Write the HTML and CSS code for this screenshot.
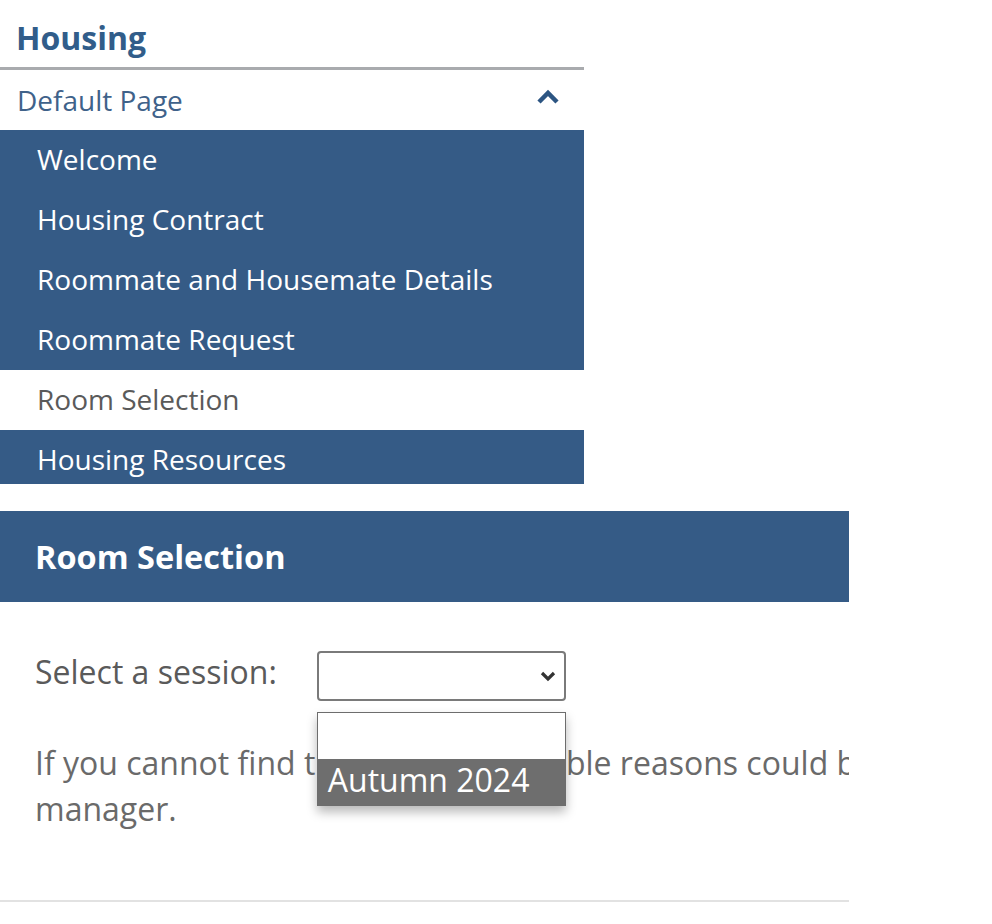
FILE: index.html
```html
<!DOCTYPE html>
<html lang="en">
<head>
<meta charset="utf-8">
<title>Housing - Room Selection</title>
<link rel="stylesheet" href="styles.css">
</head>
<body>
<div class="page">
  <aside class="sidebar">
    <h2 class="side-title">Housing</h2>
    <div class="group-head">
      <span>Default Page</span>
      <svg class="chev-up" width="24" height="16" viewBox="0 0 24 16" aria-hidden="true"><path d="M3 13 L12 4 L21 13" fill="none" stroke="#2c5582" stroke-width="4.5" stroke-linejoin="miter"/></svg>
    </div>
    <ul class="nav">
      <li class="nav-item">Welcome</li>
      <li class="nav-item">Housing Contract</li>
      <li class="nav-item">Roommate and Housemate Details</li>
      <li class="nav-item">Roommate Request</li>
      <li class="nav-item current">Room Selection</li>
      <li class="nav-item last">Housing Resources</li>
    </ul>
  </aside>

  <section class="panel">
    <h1 class="panel-title">Room Selection</h1>
    <div class="panel-body">
      <div class="session-row">
        <span class="session-label">Select a session:</span>
        <div class="select-wrap">
          <div class="select-box">
            <svg class="chev-down" width="18" height="12" viewBox="0 0 18 12" aria-hidden="true"><path d="M3 3 L9 9 L15 3" fill="none" stroke="#333" stroke-width="3.2"/></svg>
          </div>
          <div class="dropdown">
            <div class="option blank"></div>
            <div class="option selected">Autumn 2024</div>
          </div>
        </div>
      </div>
      <p class="note"><span class="line1">If you cannot find the session, possible reasons could be that it is not yet open or you are not eligible. Please contact your housing</span><br>manager.</p>
    </div>
    <hr class="rule">
  </section>
</div>
</body>
</html>
```

FILE: styles.css
```css
* { box-sizing: border-box; }
html, body { margin: 0; padding: 0; background: #fff; }
body { font-family: "Open Sans", "Noto Sans", sans-serif; }

.page { width: 992px; }

.sidebar { width: 584px; }
.side-title {
  margin: 0;
  padding: 15px 0 0 16px;
  font-size: 32px;
  line-height: 46px;
  font-weight: 700;
  color: #315d8a;
  border-bottom: 3px solid #a9abae;
  box-sizing: content-box;
  height: 52px;
}
.group-head {
  height: 60px;
  display: flex;
  align-items: center;
  justify-content: space-between;
  padding: 0 24px 0 17px;
  font-size: 28px;
  color: #3f628a;
}
.chev-up { display: block; margin-top: -6px; }

.nav { list-style: none; margin: 0; padding: 0; }
.nav-item {
  height: 60px;
  line-height: 58px;
  padding-left: 37px;
  background: #355b86;
  color: #fff;
  font-size: 28px;
  overflow: hidden;
}
.nav-item.current { background: #fff; color: #5a5a5a; }
.nav-item.last { height: 54px; }

.panel { width: 849px; margin-top: 27px; overflow: hidden; }
.panel-title {
  margin: 0;
  height: 91px;
  display: flex;
  align-items: center;
  padding-left: 35px;
  background: #355b86;
  color: #fff;
  font-size: 32.5px;
  font-weight: 700;
}
.panel-body { padding: 48px 0 0 35px; }
.session-row { display: flex; align-items: center; gap: 40px; }
.session-label { font-size: 32px; color: #5a5a5a; padding-bottom: 8px; }
.select-wrap { position: relative; }
.select-box {
  width: 249px;
  height: 50px;
  border: 2px solid #7a7a7a;
  border-radius: 4px;
  background: #fff;
  display: flex;
  align-items: center;
  justify-content: flex-end;
  padding-right: 7px;
}
.chev-down { display: block; }
.dropdown {
  position: absolute;
  left: 0;
  top: 61px;
  width: 249px;
  border: 1.5px solid #6d6d6d;
  background: #fff;
  box-shadow: 0 6px 10px rgba(0,0,0,0.28);
  z-index: 2;
}
.option { height: 46px; }
.option.selected {
  background: #6e6e6e;
  color: #fff;
  font-size: 32px;
  line-height: 42px;
  padding-left: 10px;
}
.note {
  margin: 39px 0 0;
  font-size: 32px;
  line-height: 46px;
  color: #6a6a6a;
}
.line1 { white-space: nowrap; }
.rule {
  margin: 68px 0 0;
  border: 0;
  border-top: 2px solid #e2e2e2;
  height: 0;
}
```
